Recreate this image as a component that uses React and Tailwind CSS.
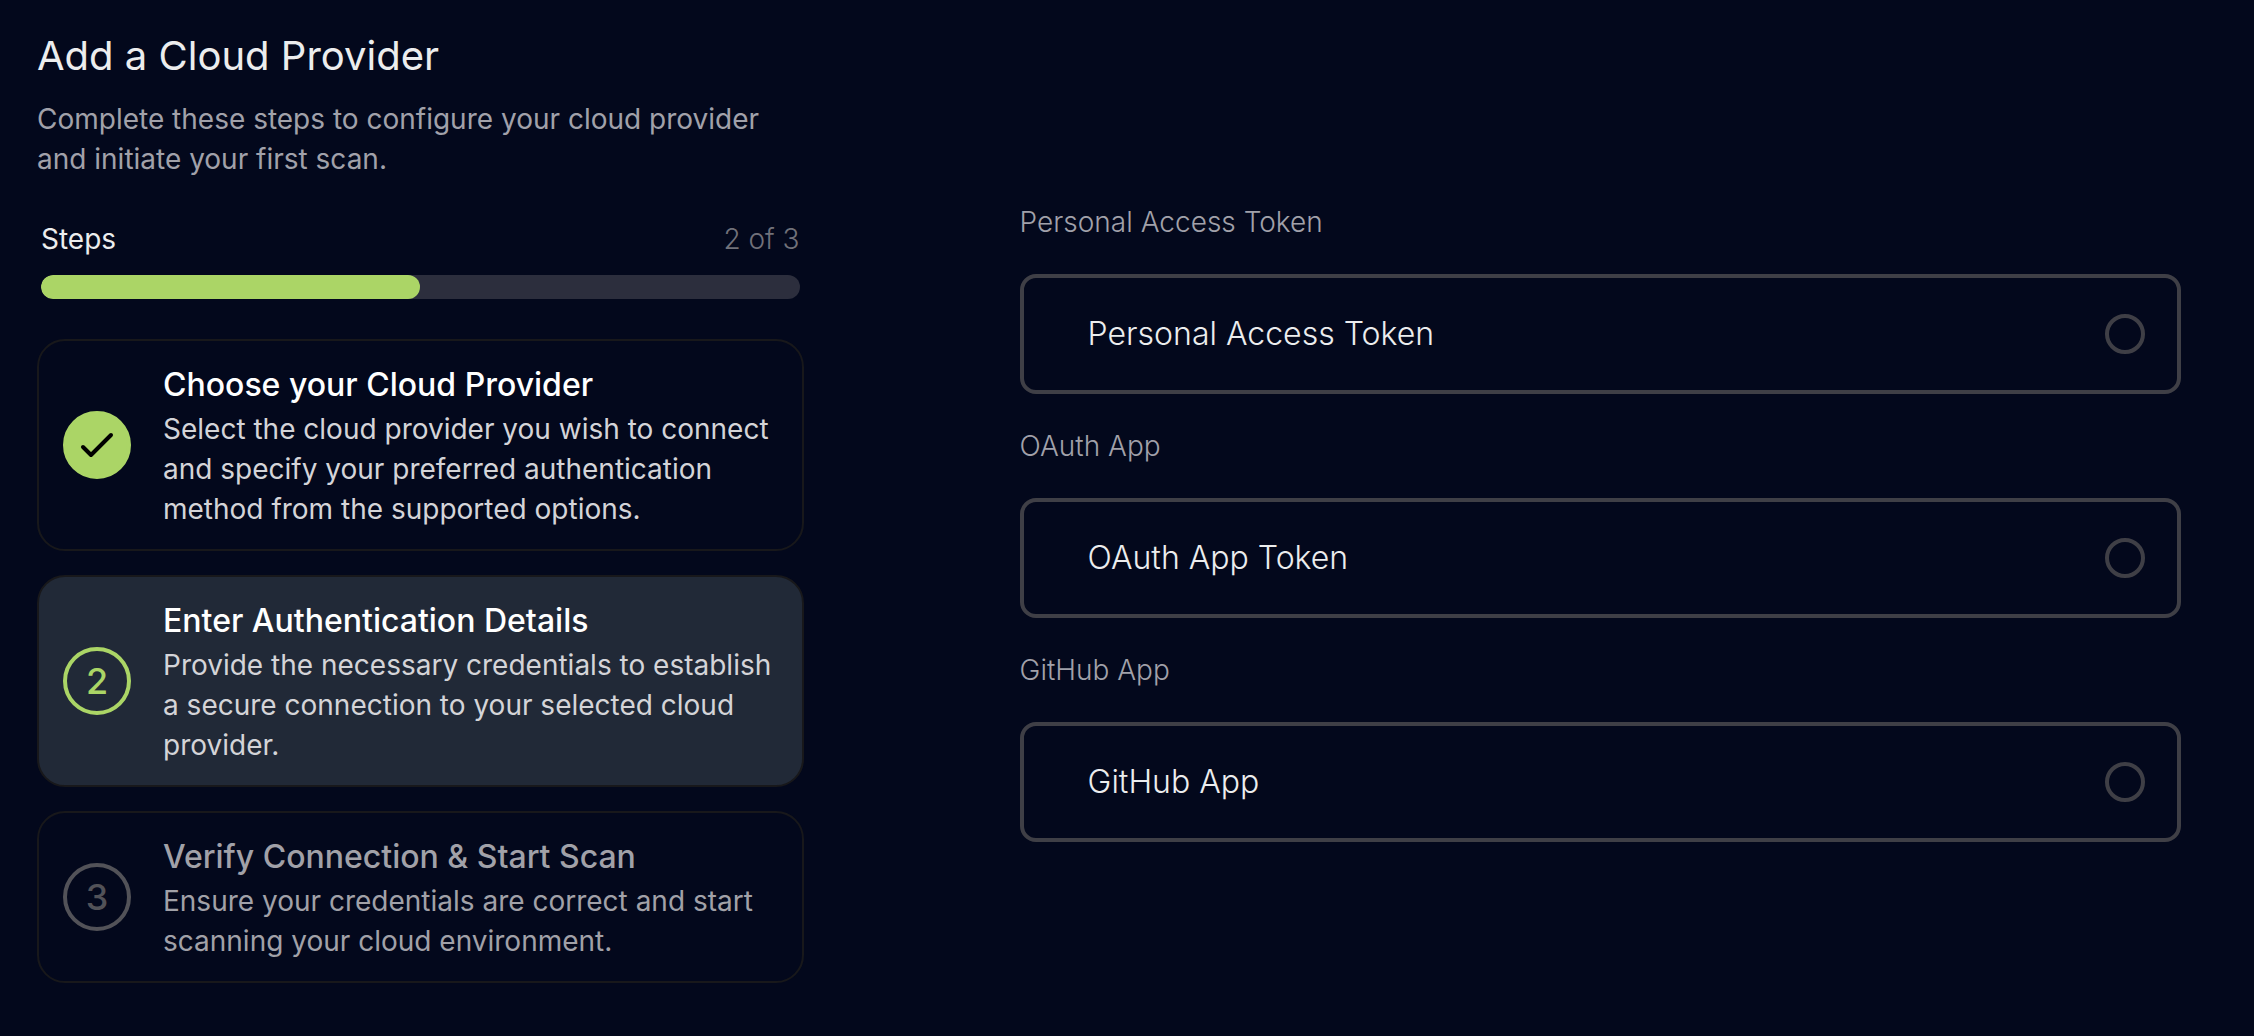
import React, { useState } from "react";

const steps = [
  {
    title: "Choose your Cloud Provider",
    description:
      "Select the cloud provider you wish to connect and specify your preferred authentication method from the supported options.",
    status: "complete",
  },
  {
    title: "Enter Authentication Details",
    description:
      "Provide the necessary credentials to establish a secure connection to your selected cloud provider.",
    status: "active",
  },
  {
    title: "Verify Connection & Start Scan",
    description:
      "Ensure your credentials are correct and start scanning your cloud environment.",
    status: "inactive",
  },
];

const methods = [
  { group: "Personal Access Token", label: "Personal Access Token", value: "pat" },
  { group: "OAuth App", label: "OAuth App Token", value: "oauth" },
  { group: "GitHub App", label: "GitHub App", value: "github" },
];

const cardStyles = {
  complete: "bg-transparent",
  active: "bg-[#212937]",
  inactive: "bg-transparent",
};
const circleStyles = {
  complete: "border-[#abd566] bg-[#abd566] text-black",
  active: "border-[#abd566] text-[#abd566]",
  inactive: "border-[#525258] text-[#525258]",
};
const titleStyles = {
  complete: "text-white",
  active: "text-white",
  inactive: "text-[#a1a1a8]",
};
const descriptionStyles = {
  complete: "text-[#d4d4d8]",
  active: "text-[#d4d4d8]",
  inactive: "text-[#a1a1a8]",
};

function CheckIcon() {
  return (
    <svg
      className="size-12 shrink-0"
      viewBox="0 0 24 24"
      fill="none"
      stroke="currentColor"
      strokeWidth="2"
      strokeLinecap="round"
      strokeLinejoin="round"
      aria-hidden="true"
    >
      <path d="M5 13l4 4L19 7" />
    </svg>
  );
}

function Step({ step, number }) {
  return (
    <li>
      <button
        type="button"
        aria-current={step.status === "active" ? "step" : undefined}
        className={`flex w-full items-center gap-8 rounded-[28px] border-2 border-[#18181b] px-6 py-5 text-left ${cardStyles[step.status]}`}
      >
        <span
          className={`flex size-17 shrink-0 items-center justify-center rounded-full border-4 text-4xl font-medium ${circleStyles[step.status]}`}
        >
          {step.status === "complete" ? <CheckIcon /> : number}
        </span>
        <span className="flex-1">
          <span className={`block text-[32px] leading-12 font-medium ${titleStyles[step.status]}`}>
            {step.title}
          </span>
          <span className={`block text-[28px] leading-10 font-normal ${descriptionStyles[step.status]}`}>
            {step.description}
          </span>
        </span>
      </button>
    </li>
  );
}

export default function App() {
  const [method, setMethod] = useState("");
  return (
    <main className="grid min-h-screen grid-cols-[767fr_1162fr] items-start gap-x-54 bg-[#03081c] pr-[73px] pl-[37px] font-['Inter',sans-serif]">
      <section className="pt-7">
        <h1 className="text-[40px] leading-14 text-[#ecedee]">Add a Cloud Provider</h1>
        <p className="mt-[15px] pr-8 text-[28px] leading-10 text-[#a1a1aa]">
          Complete these steps to configure your cloud provider and initiate your first scan.
        </p>
        <div className="mt-10 flex flex-col gap-4 px-1">
          <div className="flex justify-between text-[28px] leading-10">
            <span id="steps-label" className="text-[#ecedee]">Steps</span>
            <span className="font-light text-[#71717a]">2 of 3</span>
          </div>
          <div
            role="progressbar"
            aria-labelledby="steps-label"
            aria-valuemin={0}
            aria-valuemax={2}
            aria-valuenow={1}
            className="h-6 overflow-hidden rounded-full bg-[#2c2e3d]"
          >
            <div className="h-full w-1/2 rounded-full bg-[#abd566]" />
          </div>
        </div>
        <ol className="mt-10 flex flex-col gap-6">
          {steps.map((step, i) => (
            <Step key={step.title} step={step} number={i + 1} />
          ))}
        </ol>
      </section>

      <form className="flex flex-col gap-8 pt-[202px]">
        {methods.map((m) => (
          <div key={m.value} className="flex flex-col gap-8">
            <span className="text-[28px] leading-10 font-light text-[#a1a1aa]">{m.group}</span>
            <label className="flex h-30 cursor-pointer items-center justify-between rounded-2xl border-4 border-[#3f3f46] pr-8 pl-16">
              <span className="text-[32px] leading-12 font-light text-[#ecedee]">{m.label}</span>
              <input
                type="radio"
                name="method"
                value={m.value}
                checked={method === m.value}
                onChange={() => setMethod(m.value)}
                className="size-10 appearance-none rounded-full border-4 border-[#3f3f46] checked:border-[#abd566]"
              />
            </label>
          </div>
        ))}
      </form>
    </main>
  );
}
